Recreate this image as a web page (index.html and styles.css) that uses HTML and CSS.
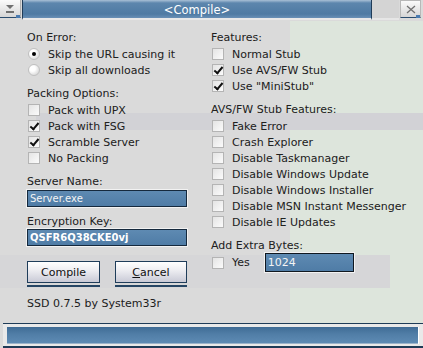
FILE: index.html
```html
<!DOCTYPE html>
<html lang="en">
<head>
  <meta charset="UTF-8">
  <title>&lt;Compile&gt;</title>
  <link rel="stylesheet" href="styles.css">
</head>
<body>
  <div class="window">

    <!-- windows behind, seen through the translucent dialog -->
    <div class="ghost">
      <div class="ghost-pane green"></div>
      <div class="ghost-band"></div>
      <div class="ghost-pane box"></div>
    </div>

    <div class="titlebar">
      <div class="tb-btn menu">
        <svg width="12" height="10" viewBox="0 0 12 10"><path d="M2 1h8L6 5z" fill="#707070"/><rect x="2" y="7" width="8" height="2" fill="#707070"/></svg>
      </div>
      <div class="tb-title"><span>&lt;Compile&gt;</span></div>
      <div class="tb-gap"></div>
      <div class="tb-btn close">
        <svg width="10" height="9" viewBox="0 0 10 9"><path d="M1 1l8 7M9 1L1 8" stroke="#707070" stroke-width="1.3"/></svg>
      </div>
    </div>

    <div class="content">
      <div class="col left">
        <div class="label">On Error:</div>
        <div class="opt"><span class="radio on"></span>Skip the URL causing it</div>
        <div class="opt"><span class="radio"></span>Skip all downloads</div>

        <div class="label gap">Packing Options:</div>
        <div class="opt"><span class="check"></span>Pack with UPX</div>
        <div class="opt"><span class="check on"></span>Pack with FSG</div>
        <div class="opt"><span class="check on"></span>Scramble Server</div>
        <div class="opt"><span class="check"></span>No Packing</div>

        <div class="label gap">Server Name:</div>
        <div class="field">Server.exe</div>
        <div class="label small-gap">Encryption Key:</div>
        <div class="field key">QSFR6Q38CKE0vj</div>

        <div class="buttons">
          <button class="btn">Compile</button>
          <button class="btn"><u>C</u>ancel</button>
        </div>

        <div class="credit">SSD 0.7.5 by System33r</div>
      </div>

      <div class="col right">
        <div class="label">Features:</div>
        <div class="opt"><span class="check"></span>Normal Stub</div>
        <div class="opt"><span class="check on"></span>Use AVS/FW Stub</div>
        <div class="opt"><span class="check on"></span>Use "MiniStub"</div>

        <div class="label gap">AVS/FW Stub Features:</div>
        <div class="opt"><span class="check"></span>Fake Error</div>
        <div class="opt"><span class="check"></span>Crash Explorer</div>
        <div class="opt"><span class="check"></span>Disable Taskmanager</div>
        <div class="opt"><span class="check"></span>Disable Windows Update</div>
        <div class="opt"><span class="check"></span>Disable Windows Installer</div>
        <div class="opt"><span class="check"></span>Disable MSN Instant Messenger</div>
        <div class="opt"><span class="check"></span>Disable IE Updates</div>

        <div class="label gap">Add Extra Bytes:</div>
        <div class="opt bytes"><span class="check"></span>Yes<div class="field num">1024</div></div>
      </div>
    </div>

    <div class="statusbar"><div class="status-fill"></div></div>
  </div>
</body>
</html>
```

FILE: styles.css
```css
body {
  margin: 0;
  font-family: "DejaVu Sans", sans-serif;
  font-size: 11px;
  color: #202020;
  background: #d9d9d9;
}

.window {
  position: relative;
  width: 423px;
  height: 348px;
  overflow: hidden;
  background: #dadada;
  display: flex;
  flex-direction: column;
}

/* ghost layer */
.ghost {
  position: absolute;
  inset: 0;
}

.ghost-pane.green {
  position: absolute;
  left: 290px;
  top: 21px;
  right: 0;
  bottom: 25px;
  background: #dde5dc;
}

.ghost-pane.box {
  position: absolute;
  left: 0;
  top: 255px;
  width: 390px;
  height: 33px;
  background: #d6d6d8;
}

.ghost-band {
  position: absolute;
  left: 36px;
  top: 113px;
  width: 387px;
  height: 17px;
  background: #d2d2d6;
}

/* title bar */
.titlebar {
  position: relative;
  display: flex;
  height: 21px;
  flex-shrink: 0;
}

.tb-btn {
  display: flex;
  align-items: center;
  justify-content: center;
  width: 21px;
  height: 18px;
  background: linear-gradient(#fbfbfb, #d6d6d6);
  border-bottom: 1px solid #2a4c6e;
  box-sizing: border-box;
  position: relative;
}

.tb-btn::after {
  content: "";
  position: absolute;
  right: 0;
  bottom: -1px;
  width: 4px;
  height: 3px;
  background: #4a7bb0;
}

.tb-btn.menu {
  border-right: 1px solid #b0b0b0;
}

.tb-title {
  width: 350px;
  margin-left: 1px;
  height: 20px;
  box-sizing: border-box;
  border-left: 1px solid #1f3c58;
  border-right: 1px solid #1f3c58;
  border-bottom: 2px solid #e8e8e8;
  background: linear-gradient(#a9c0d6 0, #5d86ad 3px, #4e7aa3 14px, #6990b6 18px);
  display: flex;
  align-items: center;
  justify-content: center;
}

.tb-title span {
  color: #ffffff;
  font-size: 11.5px;
  margin-top: 1px;
}

.tb-gap {
  width: 27px;
  border-bottom: 2px solid #e6e6e6;
  height: 20px;
  box-sizing: border-box;
  background: #d4d4d4;
}

.tb-btn.close {
  margin-left: 1px;
  border: 1px solid #b8b8b8;
  border-bottom: 1px solid #2a4c6e;
}

/* content */
.content {
  position: relative;
  flex: 1;
  display: grid;
  grid-template-columns: 184px 212px;
  padding: 9px 0 0 27px;
  border-left: 2px solid #3b5e80;
  margin-left: -2px;
}

.col {
  display: flex;
  flex-direction: column;
}

.label {
  height: 16px;
  line-height: 16px;
}

.label.gap {
  margin-top: 8px;
}

.label.small-gap {
  margin-top: 7px;
  height: 15px;
  line-height: 15px;
}

.opt {
  display: flex;
  align-items: center;
  height: 16px;
  white-space: nowrap;
}

.left .opt {
  padding-left: 1px;
}

.right .opt {
  margin-left: 1px;
}

.check,
.radio {
  width: 12px;
  height: 12px;
  box-sizing: border-box;
  margin-right: 8px;
  flex-shrink: 0;
  position: relative;
}

.check {
  border: 1px solid #b4b4b4;
  background: linear-gradient(135deg, #e4e4e4, #fbfbfb);
}

.check.on::after {
  content: "";
  position: absolute;
  left: 3px;
  top: 0px;
  width: 3px;
  height: 7px;
  border: solid #101010;
  border-width: 0 2px 2px 0;
  transform: rotate(40deg);
}

.radio {
  border-radius: 50%;
  background: radial-gradient(circle at 35% 35%, #ffffff 30%, #c8c8c8 100%);
  border: 1px solid #c0c0c0;
}

.radio.on::after {
  content: "";
  position: absolute;
  left: 3px;
  top: 3px;
  width: 4px;
  height: 4px;
  border-radius: 50%;
  background: #000;
}

.field {
  width: 160px;
  height: 17px;
  box-sizing: border-box;
  border: 1px solid #15293d;
  box-shadow: 0 0 0 1px #f2f2f2;
  background: linear-gradient(#5e8ab2, #4f7ca6);
  color: #f4f4f4;
  font-size: 10px;
  line-height: 15px;
  padding-left: 2px;
}

.field.key {
  font-weight: bold;
  color: #ffffff;
}

.buttons {
  display: flex;
  gap: 15px;
  margin-top: 15px;
}

.btn {
  width: 73px;
  height: 22px;
  font-family: "DejaVu Sans", sans-serif;
  font-size: 11px;
  color: #101010;
  border: 1px solid #1f3d5a;
  border-radius: 0;
  background: linear-gradient(#ffffff, #eeeef2 40%, #c9cad6);
  box-shadow: 0 2px 0 #d8d8d8, 0 4px 0 #254564;
  padding: 0;
  cursor: pointer;
}

.btn:nth-child(2) {
  width: 72px;
}

.credit {
  margin-top: 13px;
  height: 16px;
  line-height: 16px;
}

.opt.bytes {
  height: 19px;
  margin-top: -1px;
}

.field.num {
  width: 89px;
  height: 19px;
  margin-left: 15px;
  font-size: 11px;
  line-height: 17px;
  border-color: #101820;
}

/* status bar */
.statusbar {
  position: relative;
  height: 25px;
  flex-shrink: 0;
  margin-left: 3px;
  border-top: 1px solid #1e3b57;
  border-bottom: 2px solid #1e3b57;
  background: #e9e9e9;
  padding: 3px 4px 2px 4px;
  box-sizing: border-box;
}

.status-fill {
  height: 100%;
  background: linear-gradient(#3f6b95, #507da6 40%, #5f8cb5);
  border-right: 1px solid #ffffff;
  box-shadow: inset 0 -1px 0 #9ab3cb;
}
```
